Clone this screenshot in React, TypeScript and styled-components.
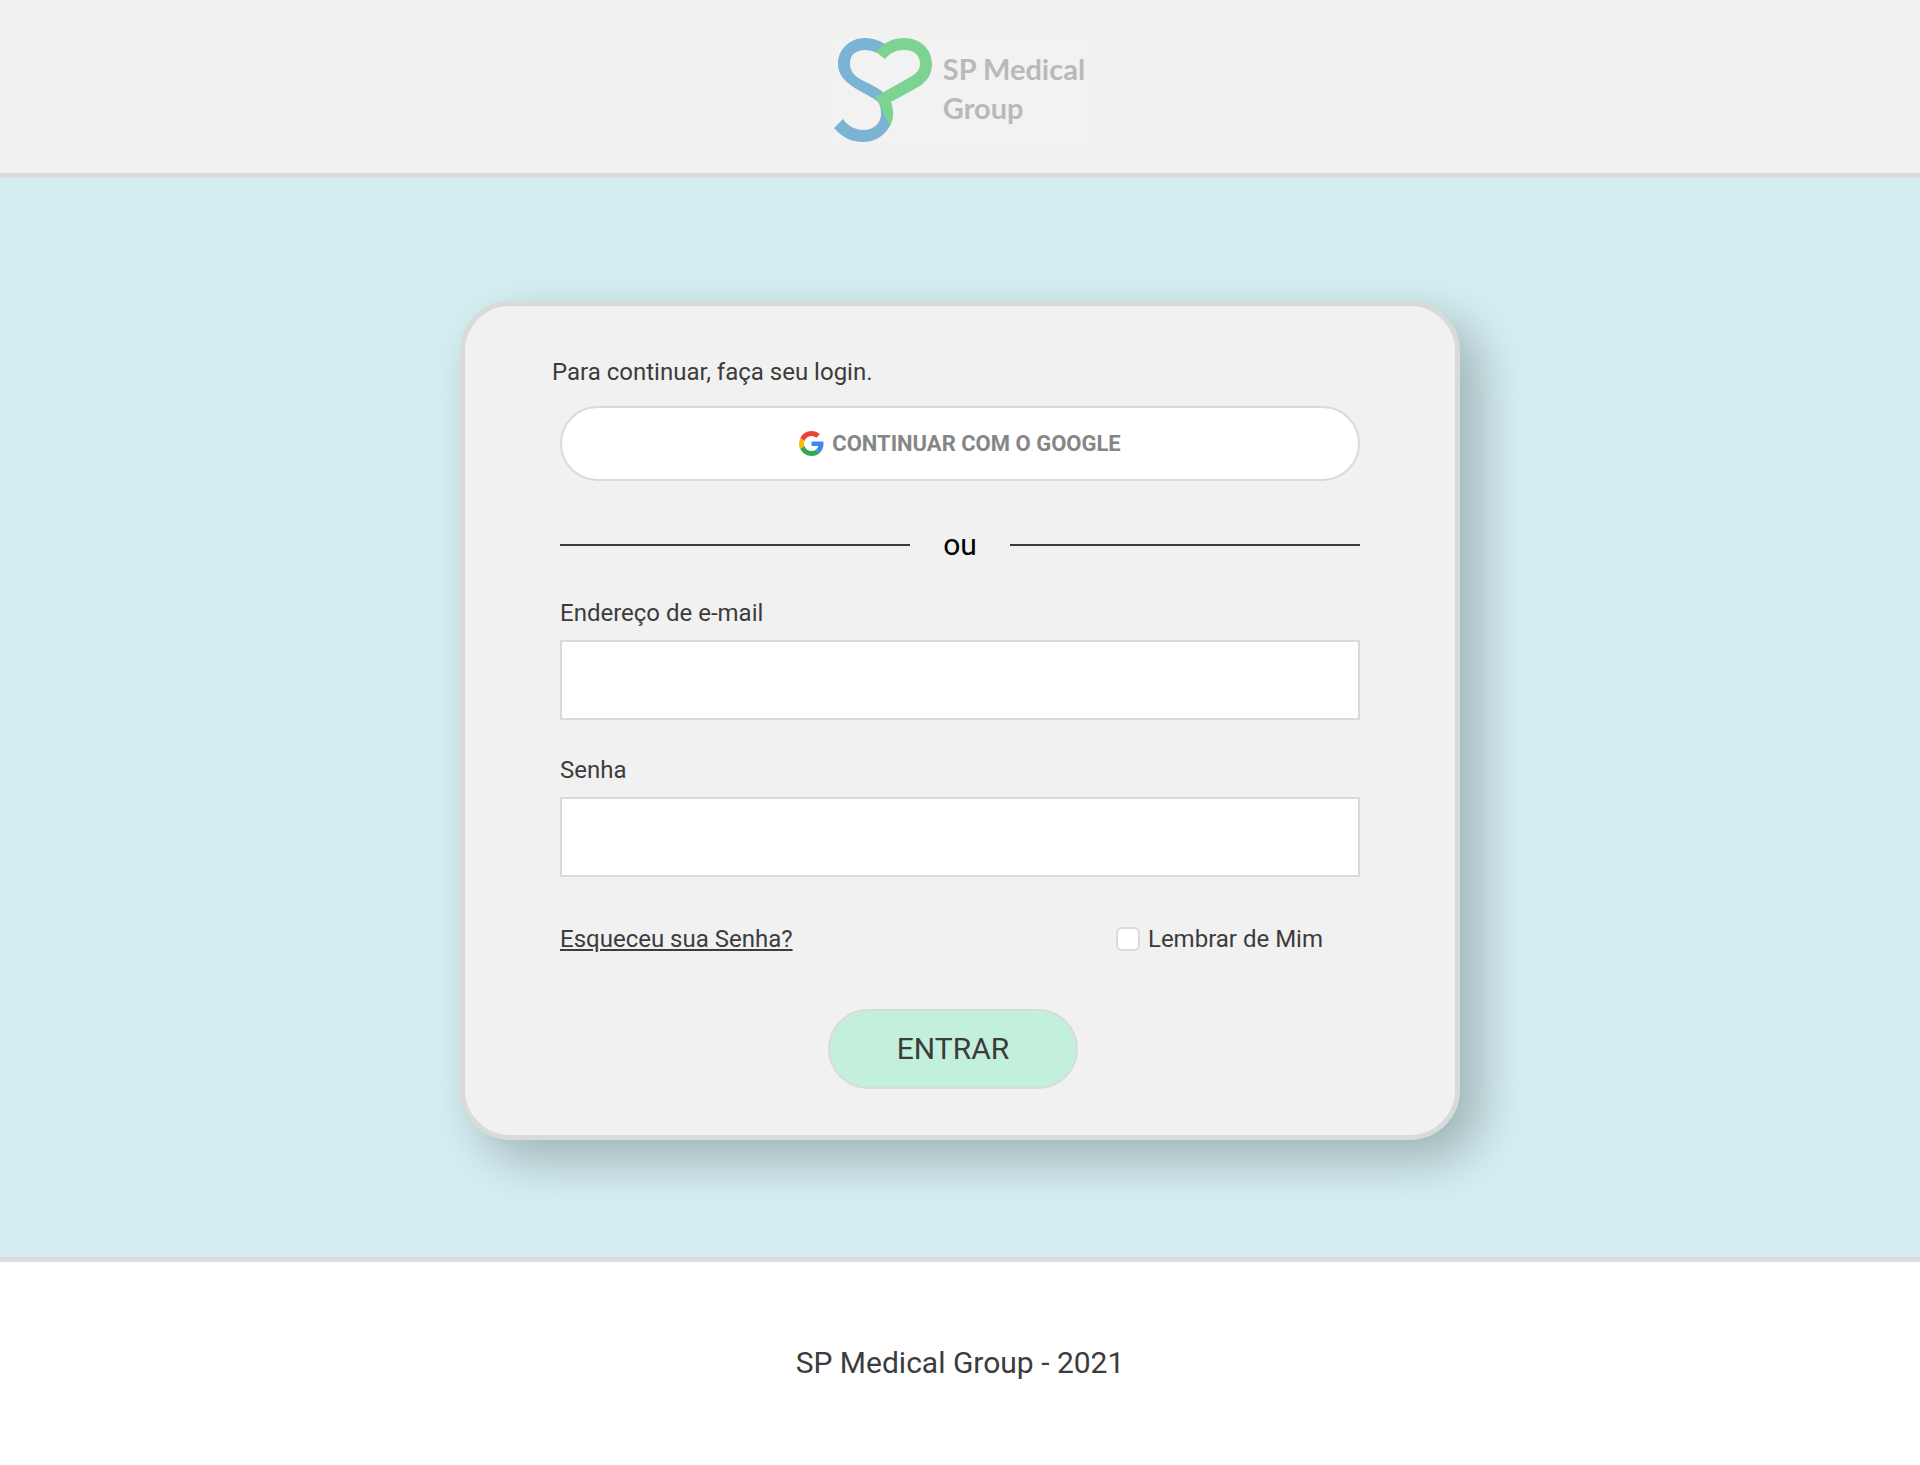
import React from "react";
import styled, { createGlobalStyle } from "styled-components";

const GlobalStyle = createGlobalStyle`
  *, *::before, *::after { box-sizing: border-box; }
  body {
    margin: 0;
    background: #ffffff;
    color: #3c3c3c;
    font-family: Roboto, "Liberation Sans", sans-serif;
    font-size: 24px;
    line-height: 28px;
  }
  button, input { font: inherit; color: inherit; }
`;

const Header = styled.header`
  display: flex;
  justify-content: center;
  padding: 36px 24px 30px;
  background: #f1f1f1;
  border-bottom: 5px solid #dadbda;
`;

const Logo = styled.div`
  display: flex;
  gap: 10px;
  padding-right: 2px;
  background: #f2f2f2;
`;

const LogoMark = styled.svg`
  display: block;
  width: 100px;
  height: 107px;
`;

const LogoText = styled.span`
  padding-top: 13px;
  color: #b9b9b9;
  font-family: Lato, "Open Sans", sans-serif;
  font-size: 29px;
  font-weight: 700;
  line-height: 39px;
`;

const Main = styled.main`
  display: flex;
  justify-content: center;
  padding: 123px 24px 117px;
  background: #d4eef2;
`;

const Card = styled.form`
  display: flex;
  flex-direction: column;
  width: 100%;
  max-width: 1000px;
  padding: 52px 95px 46px;
  background: #f1f1f1;
  border: 5px solid #dadada;
  border-radius: 50px;
  box-shadow: 20px 20px 50px rgba(0, 0, 0, 0.25);
`;

const Title = styled.h1`
  margin: 0 0 20px -8px;
  font-size: 24px;
  font-weight: 400;
`;

const GoogleButton = styled.button`
  display: flex;
  align-items: center;
  justify-content: center;
  gap: 8px;
  height: 75px;
  background: #ffffff;
  border: 2px solid #dadada;
  border-radius: 40px;
  color: #868686;
  font-size: 22px;
  font-weight: 700;
  cursor: pointer;
`;

const GoogleIcon = styled.svg`
  width: 25px;
  height: 25px;
`;

const Divider = styled.div`
  display: flex;
  align-items: center;
  margin: 46px 0 37px;
  color: #000000;
  font-size: 30px;
  line-height: 35px;

  &::before, &::after {
    content: "";
    flex: 1;
    height: 2px;
    background: #3c3c3c;
  }
`;

const DividerText = styled.span`
  width: 100px;
  text-align: center;
`;

const Field = styled.div`
  display: flex;
  flex-direction: column;
  gap: 13px;

  & + & { margin-top: 36px; }
`;

const TextInput = styled.input`
  width: 100%;
  height: 80px;
  padding: 0 20px;
  background: #ffffff;
  border: 2px solid #dadada;
  border-radius: 0;
`;

const Options = styled.div`
  display: flex;
  flex-wrap: wrap;
  justify-content: space-between;
  margin-top: 48px;
  padding-right: 37px;
`;

const ForgotLink = styled.a`
  color: inherit;
`;

const Remember = styled.label`
  display: flex;
  align-items: center;
  gap: 8px;
`;

const Checkbox = styled.input`
  appearance: none;
  width: 24px;
  height: 24px;
  margin: 0;
  background: #ffffff;
  border: 2px solid #dadada;
  border-radius: 6px;

  &:checked { background: #c3f0dd; }
`;

const Submit = styled.button`
  align-self: center;
  width: 250px;
  height: 80px;
  margin: 56px 14px 0 0;
  background: #c3f0dd;
  border: 2px solid #dadada;
  border-radius: 40px;
  font-size: 30px;
  cursor: pointer;
`;

const Footer = styled.footer`
  padding: 83px 24px 84px;
  border-top: 5px solid #dadbda;
  font-size: 30px;
  line-height: 35px;
  text-align: center;
`;

export default function App() {
  return (
    <>
      <GlobalStyle />
      <Header>
        <Logo>
          <LogoMark viewBox="0 0 100 107" fill="none" aria-hidden="true">
            <path d="M52 8C46 4 39 2 32 2C17 2 5 13 5 28C5 36 9 42 15 47C23 54 36 59 44 65C47 68 48 72 48 78C48 88 40 94 30 94C22 94 15 90 10 83L1 92C9 101 18 106 30 106C42 106 51 100 57 90L56 62L50 56C41 49 31 46 24 41C19 37 17 33 17 27C17 19 23 14 32 14C36 14 40 15 44 17Z" fill="#7ab3d4" />
            <path d="M43 16C50 7 59 2 71 2C87 2 99 13 99 28C99 38 94 45 87 50L58 66C61 75 61 83 57 90C54 84 51 79 49 73C47 68 45 65 42 61L79 40C84 37 87 33 87 28C87 19 81 14 71 14C63 14 57 17 52 23Z" fill="#7dd492" />
          </LogoMark>
          <LogoText>
            SP Medical
            <br />
            Group
          </LogoText>
        </Logo>
      </Header>
      <Main>
        <Card onSubmit={(event) => event.preventDefault()}>
          <Title>Para continuar, faça seu login.</Title>
          <GoogleButton type="button">
            <GoogleIcon viewBox="0 0 48 48" aria-hidden="true">
              <path fill="#EA4335" d="M24 9.5c3.54 0 6.71 1.22 9.21 3.6l6.85-6.85C35.9 2.38 30.47 0 24 0 14.62 0 6.51 5.38 2.56 13.22l7.98 6.19C12.43 13.72 17.74 9.5 24 9.5z" />
              <path fill="#4285F4" d="M46.98 24.55c0-1.57-.15-3.09-.38-4.55H24v9.02h12.94c-.58 2.96-2.26 5.48-4.78 7.18l7.73 6c4.51-4.18 7.09-10.36 7.09-17.65z" />
              <path fill="#FBBC05" d="M10.53 28.59c-.48-1.45-.76-2.99-.76-4.59s.27-3.14.76-4.59l-7.98-6.19C.92 16.46 0 20.12 0 24c0 3.88.92 7.54 2.56 10.78l7.97-6.19z" />
              <path fill="#34A853" d="M24 48c6.48 0 11.93-2.13 15.89-5.81l-7.73-6c-2.15 1.45-4.92 2.3-8.16 2.3-6.26 0-11.57-4.22-13.47-9.91l-7.98 6.19C6.51 42.62 14.62 48 24 48z" />
            </GoogleIcon>
            CONTINUAR COM O GOOGLE
          </GoogleButton>
          <Divider>
            <DividerText>ou</DividerText>
          </Divider>
          <Field>
            <label htmlFor="email">Endereço de e-mail</label>
            <TextInput id="email" type="email" />
          </Field>
          <Field>
            <label htmlFor="password">Senha</label>
            <TextInput id="password" type="password" />
          </Field>
          <Options>
            <ForgotLink href="#">Esqueceu sua Senha?</ForgotLink>
            <Remember>
              <Checkbox type="checkbox" />
              Lembrar de Mim
            </Remember>
          </Options>
          <Submit type="submit">ENTRAR</Submit>
        </Card>
      </Main>
      <Footer>SP Medical Group - 2021</Footer>
    </>
  );
}
